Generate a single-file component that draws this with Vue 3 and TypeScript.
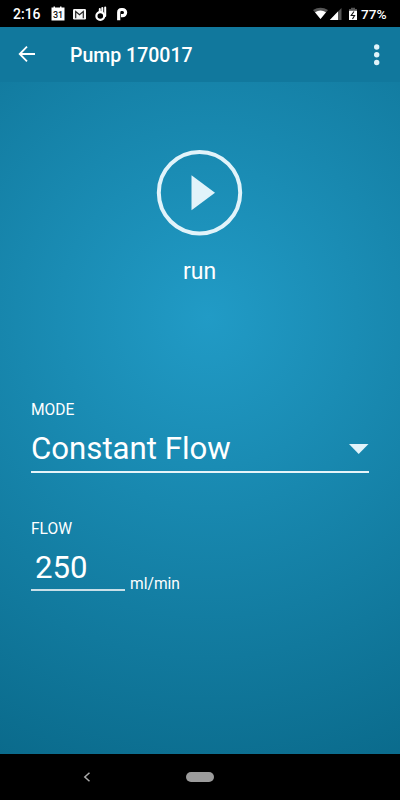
<script setup lang="ts">
import { ref } from 'vue'

const title = ref('Pump 170017')
const mode = ref('Constant Flow')
const flow = ref('250')
</script>

<template>
  <div class="phone">
    <header class="status">
      <span class="clock">2:16</span>
      <svg class="notices" width="78" height="16" viewBox="0 0 78 16">
        <path d="M1.500 1.500h2V.5h1.500v1h5V.5H11.500v1h3v13h-13z" fill="#fff" />
        <text x="8" y="11.500" text-anchor="middle" class="day">31</text>
        <rect x="23" y="3" width="13" height="10.500" rx="1.200" fill="#f4f4f4" />
        <path d="M25.700 12.200V5.500L29.500 8.800 33.300 5.500V12.200" fill="none" stroke="#222" stroke-width="1.200" />
        <circle cx="50.300" cy="10" r="3.900" fill="none" stroke="#fff" stroke-width="2.200" />
        <path d="M55.200 1.500V10M52.300 2v4M49.800 3v3" fill="none" stroke="#fff" stroke-width="2" stroke-linecap="round" />
        <path d="M68.700 14.300V6.500Q68.700 3.500 71.500 3.500H72.500A3.100 3.100 0 0 1 72.500 9.700H71" fill="none" stroke="#fff" stroke-width="3.200" />
      </svg>
      <svg class="signals" width="46" height="14" viewBox="0 0 46 14">
        <path d="M0 3Q7.500-1.500 15 3L7.500 12z" fill="#555" />
        <path d="M2 5.200Q7.500 2 13 5.200L7.500 12z" fill="#fff" />
        <path d="M28.500 1V13H16.800z" fill="#555" />
        <path d="M25 4.500V13H16.800z" fill="#fff" />
        <path d="M36 2h2V.8h4V2h2v2h-8z" fill="#555" />
        <path d="M36 3.800h8V13h-8z" fill="#fff" />
        <path d="M41 4.500L38.200 8.500H41.600L39.500 12" fill="none" stroke="#111" stroke-width="1.100" />
      </svg>
      <span class="battery">77%</span>
    </header>

    <main class="screen">
      <div class="appbar">
        <button class="back" aria-label="Back">
          <svg width="18" height="18" viewBox="0 0 18 18">
            <path d="M17 9H2M9 1.700L1.700 9 9 16.300" fill="none" stroke="#fff" stroke-width="1.800" />
          </svg>
        </button>
        <h1 class="title">{{ title }}</h1>
        <button class="more" aria-label="More options">
          <svg width="6" height="22" viewBox="0 0 6 22">
            <g fill="#e1f3fa">
              <circle cx="2.700" cy="3" r="2.700" />
              <circle cx="2.700" cy="10.800" r="2.700" />
              <circle cx="2.700" cy="18.500" r="2.700" />
            </g>
          </svg>
        </button>
      </div>

      <button class="run">
        <svg width="88" height="88" viewBox="0 0 88 88">
          <circle cx="43.500" cy="43.700" r="40.700" fill="none" stroke="#e1f3fa" stroke-width="4" />
          <path d="M35.500 26.200V61.200L59 43.700z" fill="#e1f3fa" />
        </svg>
        <span class="run-label">run</span>
      </button>

      <section class="field mode">
        <div class="label">MODE</div>
        <div class="select">
          <span class="value">{{ mode }}</span>
          <svg class="caret" width="20" height="10" viewBox="0 0 20 10">
            <path d="M0 0H19.500L9.700 10z" fill="#e1f3fa" />
          </svg>
        </div>
      </section>

      <section class="field flow">
        <div class="label">FLOW</div>
        <div class="amount">
          <div class="entry">{{ flow }}</div>
          <span class="unit">ml/min</span>
        </div>
      </section>
    </main>

    <nav class="navbar">
      <svg width="8" height="10" viewBox="0 0 8 10">
        <path d="M6.500.700L1.800 5 6.500 9.300" fill="none" stroke="#aaa" stroke-width="1.500" />
      </svg>
      <span class="home"></span>
    </nav>
  </div>
</template>

<style>
body {
  background: #000;
}
</style>

<style scoped>
.phone {
  width: 400px;
  height: 800px;
  display: flex;
  flex-direction: column;
  overflow: hidden;
  background: #000;
  color: #fff;
  font-family: Roboto, sans-serif;
}

button {
  padding: 0;
  border: 0;
  background: none;
  color: inherit;
  font: inherit;
}

svg {
  display: block;
  flex: none;
}

.status {
  height: 27px;
  flex: none;
  box-sizing: border-box;
  display: flex;
  align-items: center;
  padding: 1px 14px 0 13px;
  font-size: 14px;
  font-weight: 500;
  line-height: 16px;
}

.clock {
  width: 37px;
}

.day {
  font-size: 9px;
  font-weight: 500;
  fill: #111;
}

.signals {
  margin-left: auto;
}

.battery {
  width: 25px;
  margin-left: 2px;
  font-size: 13.7px;
}

.screen {
  height: 726.5px;
  flex: none;
  display: flex;
  flex-direction: column;
  background: radial-gradient(circle 490px at 208px 290px, #219bc6 0%, #0a6a8b 100%);
}

.appbar {
  height: 55px;
  flex: none;
  box-sizing: border-box;
  display: flex;
  align-items: center;
  padding: 0 20px 0 18px;
  background: #11789d;
}

.back {
  margin-top: -1px;
}

.title {
  margin: 2px 0 0 34px;
  font-size: 19.5px;
  line-height: 24px;
  font-weight: 500;
}

.more {
  margin-left: auto;
}

.run {
  align-self: center;
  width: 88px;
  margin: 67px 1px 0 0;
}

.run-label {
  display: block;
  margin-top: 21px;
  font-size: 23px;
  line-height: 28px;
  text-align: center;
}

.field {
  margin: 0 31px;
}

.mode {
  margin-top: 115px;
}

.label {
  font-size: 15.6px;
  line-height: 18px;
}

.select {
  height: 54px;
  box-sizing: border-box;
  display: flex;
  justify-content: space-between;
  align-items: center;
  padding-top: 7px;
  border-bottom: 2px solid #e6f4f9;
}

.value {
  font-size: 31.2px;
  line-height: 40px;
}

.flow {
  margin-top: 47px;
}

.amount {
  display: flex;
  align-items: flex-end;
}

.entry {
  width: 94px;
  height: 53px;
  box-sizing: border-box;
  padding: 10px 0 0 4px;
  border-bottom: 2px solid #c8dfe8;
  font-size: 31.2px;
  line-height: 40px;
}

.unit {
  margin: 0 0 -3px 5px;
  font-size: 15.6px;
  line-height: 20px;
}

.navbar {
  flex: 1;
  display: flex;
  align-items: center;
  padding-left: 83px;
}

.home {
  width: 28px;
  height: 10px;
  margin-left: 95px;
  border-radius: 5px;
  background: #9c9c9c;
}
</style>
